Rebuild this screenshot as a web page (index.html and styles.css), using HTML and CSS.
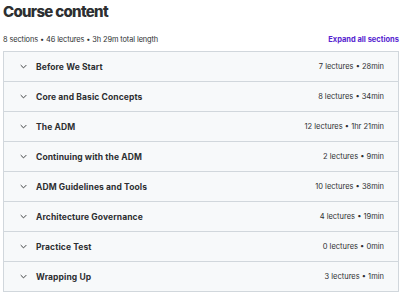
FILE: index.html
```html
<!DOCTYPE html>
<html>
<head>
<meta charset="utf-8">
<link rel="stylesheet" href="styles.css">
</head>
<body>
<div class="page">
  <h2 class="title">Course content</h2>
  <div class="meta">
    <span class="stats">8 sections • 46 lectures • 3h 29m total length</span>
    <span class="expand">Expand all sections</span>
  </div>
  <div class="sections">
    <div class="row"><span class="chev"><svg viewBox="0 0 10 6" width="7" height="5"><path d="M1 1l4 4 4-4" fill="none" stroke="#2d2f31" stroke-width="1.3"/></svg></span><span class="name">Before We Start</span><span class="info">7 lectures • 28min</span></div>
    <div class="row"><span class="chev"><svg viewBox="0 0 10 6" width="7" height="5"><path d="M1 1l4 4 4-4" fill="none" stroke="#2d2f31" stroke-width="1.3"/></svg></span><span class="name">Core and Basic Concepts</span><span class="info">8 lectures • 34min</span></div>
    <div class="row"><span class="chev"><svg viewBox="0 0 10 6" width="7" height="5"><path d="M1 1l4 4 4-4" fill="none" stroke="#2d2f31" stroke-width="1.3"/></svg></span><span class="name">The ADM</span><span class="info">12 lectures • 1hr 21min</span></div>
    <div class="row"><span class="chev"><svg viewBox="0 0 10 6" width="7" height="5"><path d="M1 1l4 4 4-4" fill="none" stroke="#2d2f31" stroke-width="1.3"/></svg></span><span class="name">Continuing with the ADM</span><span class="info">2 lectures • 9min</span></div>
    <div class="row"><span class="chev"><svg viewBox="0 0 10 6" width="7" height="5"><path d="M1 1l4 4 4-4" fill="none" stroke="#2d2f31" stroke-width="1.3"/></svg></span><span class="name">ADM Guidelines and Tools</span><span class="info">10 lectures • 38min</span></div>
    <div class="row"><span class="chev"><svg viewBox="0 0 10 6" width="7" height="5"><path d="M1 1l4 4 4-4" fill="none" stroke="#2d2f31" stroke-width="1.3"/></svg></span><span class="name">Architecture Governance</span><span class="info">4 lectures • 19min</span></div>
    <div class="row"><span class="chev"><svg viewBox="0 0 10 6" width="7" height="5"><path d="M1 1l4 4 4-4" fill="none" stroke="#2d2f31" stroke-width="1.3"/></svg></span><span class="name">Practice Test</span><span class="info">0 lectures • 0min</span></div>
    <div class="row"><span class="chev"><svg viewBox="0 0 10 6" width="7" height="5"><path d="M1 1l4 4 4-4" fill="none" stroke="#2d2f31" stroke-width="1.3"/></svg></span><span class="name">Wrapping Up</span><span class="info">3 lectures • 1min</span></div>
  </div>
</div>
</body>
</html>
```

FILE: styles.css
```css
html, body {
  margin: 0;
  padding: 0;
  background: #ffffff;
}
body {
  font-family: Inter, "Noto Sans", sans-serif;
  color: #2d2f31;
}
.page {
  padding: 3px 1px 0 3px;
  width: 396px;
}
.title {
  margin: 0;
  font-size: 15px;
  font-weight: 800;
  line-height: 17px;
  letter-spacing: -0.7px;
}
.meta {
  display: flex;
  justify-content: space-between;
  align-items: center;
  margin-top: 13px;
  height: 12px;
  margin-bottom: 6px;
}
.stats {
  font-size: 7.4px;
  letter-spacing: -0.1px;
}
.expand {
  font-size: 7.5px;
  font-weight: 700;
  color: #5624d0;
}
.sections {
  border: 1px solid #d1d7dc;
  border-bottom: 0;
}
.row {
  display: flex;
  align-items: center;
  height: 29px;
  border-bottom: 1px solid #d1d7dc;
  background: #f7f9fa;
  padding: 0 14px 0 16px;
}
.chev {
  display: flex;
  width: 16px;
}
.name {
  flex: 1;
  font-size: 8.5px;
  font-weight: 700;
  letter-spacing: 0.1px;
}
.info {
  font-size: 7.5px;
}
```
